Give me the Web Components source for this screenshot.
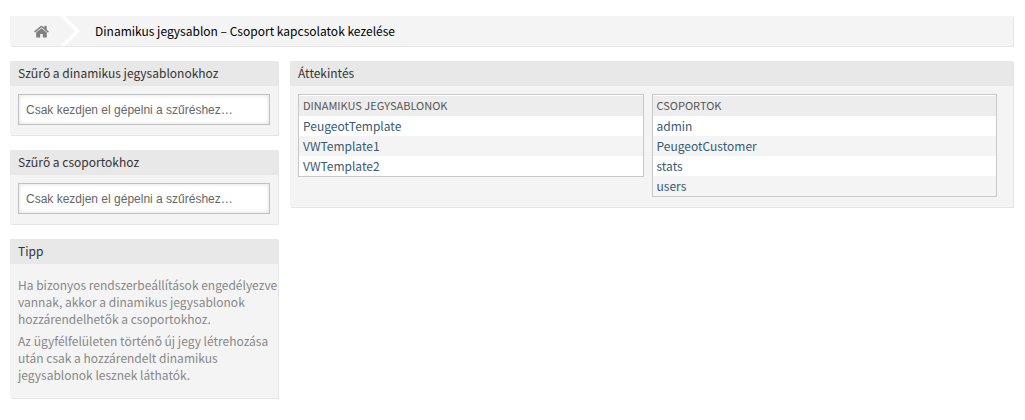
<!DOCTYPE html>
<html lang="hu">
<head>
<meta charset="utf-8">
<title>Dinamikus jegysablon – Csoport kapcsolatok kezelése</title>
<style>
body { margin: 0; background: #fff; color: #000; font: 12px/17px "Noto Sans CJK SC", "Noto Sans", sans-serif; }
</style>
</head>
<body>
<relation-page></relation-page>

<script>
class BreadCrumb extends HTMLElement {
  constructor() {
    super();
    this.attachShadow({ mode: 'open' }).innerHTML = `
      <style>
        :host { display: block; background: #f4f4f4; box-shadow: 1px 1px #e6e6e6; }
        ol { display: flex; align-items: center; height: 30px; margin: 0; padding: 0; list-style: none; }
        li { display: flex; align-items: center; }
        li[aria-current] { padding-bottom: 2px; }
        a { display: flex; align-items: center; padding-left: 24px; color: #808080; }
        .home { width: 15px; height: 13px; margin-right: 10px; }
        .sep { width: 22px; height: 30px; margin-right: 14px; }
      </style>
      <nav><ol>
        <li><a href="#" aria-label="Kezdőlap">
          <svg class="home" viewBox="0 0 15 13" fill="currentColor" aria-hidden="true">
            <path d="M7.500 3.200 2.200 7.600V12q0 .6.6.6h3.400V9h2.600v3.600h3.400q.6 0 .6-.6V7.600z"/>
            <path d="M.3 6.300 6.700 1q.8-.6 1.600 0L10.400 2.800V1q0-.3.3-.3h1.700q.3 0 .3.300v3.700l2 1.600q.2.200 0 .4l-.6.700q-.2.200-.4 0L7.500 2.200 1.300 7.400q-.2.200-.4 0L.3 6.700q-.2-.2 0-.4z"/>
          </svg>
          <svg class="sep" viewBox="0 0 22 30" aria-hidden="true"><path d="M1 0H6L21 15 6 30H1L16 15z" fill="#fff"/></svg>
        </a></li>
        <li aria-current="page"><slot></slot></li>
      </ol></nav>`;
  }
}
customElements.define('bread-crumb', BreadCrumb);

class WidgetBox extends HTMLElement {
  constructor() {
    super();
    this.attachShadow({ mode: 'open' }).innerHTML = `
      <style>
        :host { display: block; background: #f4f4f4; box-shadow: 1px 1px #e6e6e6; }
        h2 { margin: 0; padding: 0 8px 2px; background: #e8e8e8; color: #333; font-size: 12px; font-weight: 400; line-height: 23px; }
        div { padding: 8px 8px 10px; }
      </style>
      <h2><slot name="title"></slot></h2>
      <div><slot></slot></div>`;
  }
}
customElements.define('widget-box', WidgetBox);

class FilterField extends HTMLElement {
  connectedCallback() {
    const root = this.attachShadow({ mode: 'open' });
    root.innerHTML = `
      <style>
        :host { display: block; }
        input { display: block; box-sizing: border-box; width: 100%; height: 31px; padding: 0 7px;
          border: 1px solid #c0c0c0; border-radius: 0; background: #fff; outline: 0;
          box-shadow: inset 0 0 4px #ddd; font: 12px "Liberation Sans", Arial, sans-serif; color: #333; }
        input::placeholder { color: #666; opacity: 1; }
      </style>
      <input type="text" placeholder="Csak kezdjen el gépelni a szűréshez…">`;
    root.querySelector('input').setAttribute('aria-label', this.getAttribute('label'));
  }
}
customElements.define('filter-field', FilterField);

class TipText extends HTMLElement {
  constructor() {
    super();
    this.attachShadow({ mode: 'open' }).innerHTML = `
      <style>
        :host { display: block; margin-right: -8px; padding: 4px 0 0; color: #888; }
        p { margin: 0; padding-bottom: 5px; }
      </style>
      <p>Ha bizonyos rendszerbeállítások engedélyezve vannak, akkor a dinamikus jegysablonok hozzárendelhetők a csoportokhoz.</p>
      <p>Az ügyfélfelületen történő új jegy létrehozása után csak a hozzárendelt dinamikus jegysablonok lesznek láthatók.</p>`;
  }
}
customElements.define('tip-text', TipText);

class LinkTable extends HTMLElement {
  connectedCallback() {
    const root = this.attachShadow({ mode: 'open' });
    const rows = this.getAttribute('items').split(',')
      .map(name => `<tr><td><a href="#">${name}</a></td></tr>`).join('');
    root.innerHTML = `
      <style>
        :host { display: block; border: 1px solid #c8c8c8; padding-top: 1px; background: #fff; }
        table { width: 100%; border-collapse: collapse; }
        th, td { padding: 0 4px; line-height: 20px; text-align: left; font-weight: 400; }
        th { padding-bottom: 2px; background: #ededed; color: #555; font-size: 11px; line-height: 18px; text-transform: uppercase; }
        tbody tr:nth-child(even) { background: #f4f4f4; }
        a { color: #3a5a75; text-decoration: none; }
      </style>
      <table>
        <thead><tr><th scope="col">${this.getAttribute('heading')}</th></tr></thead>
        <tbody>${rows}</tbody>
      </table>`;
  }
}
customElements.define('link-table', LinkTable);

class RelationPage extends HTMLElement {
  constructor() {
    super();
    this.attachShadow({ mode: 'open' }).innerHTML = `
      <style>
        :host { display: block; padding: 16px 12px 16px 10px; }
        main { display: grid; grid-template-columns: 268px minmax(0, 1fr); gap: 12px; align-items: start; margin-top: 15px; }
        aside { display: grid; gap: 15px; }
        .lists { display: grid; grid-template-columns: 1fr 1fr; gap: 8px; align-items: start; padding-right: 8px; }
      </style>
      <bread-crumb>Dinamikus jegysablon – Csoport kapcsolatok kezelése</bread-crumb>
      <main>
        <aside>
          <widget-box><span slot="title">Szűrő a dinamikus jegysablonokhoz</span>
            <filter-field label="Szűrő a dinamikus jegysablonokhoz"></filter-field></widget-box>
          <widget-box><span slot="title">Szűrő a csoportokhoz</span>
            <filter-field label="Szűrő a csoportokhoz"></filter-field></widget-box>
          <widget-box><span slot="title">Tipp</span><tip-text></tip-text></widget-box>
        </aside>
        <widget-box><span slot="title">Áttekintés</span>
          <div class="lists">
            <link-table heading="Dinamikus jegysablonok" items="PeugeotTemplate,VWTemplate1,VWTemplate2"></link-table>
            <link-table heading="Csoportok" items="admin,PeugeotCustomer,stats,users"></link-table>
          </div>
        </widget-box>
      </main>`;
  }
}
customElements.define('relation-page', RelationPage);
</script>
</body>
</html>
